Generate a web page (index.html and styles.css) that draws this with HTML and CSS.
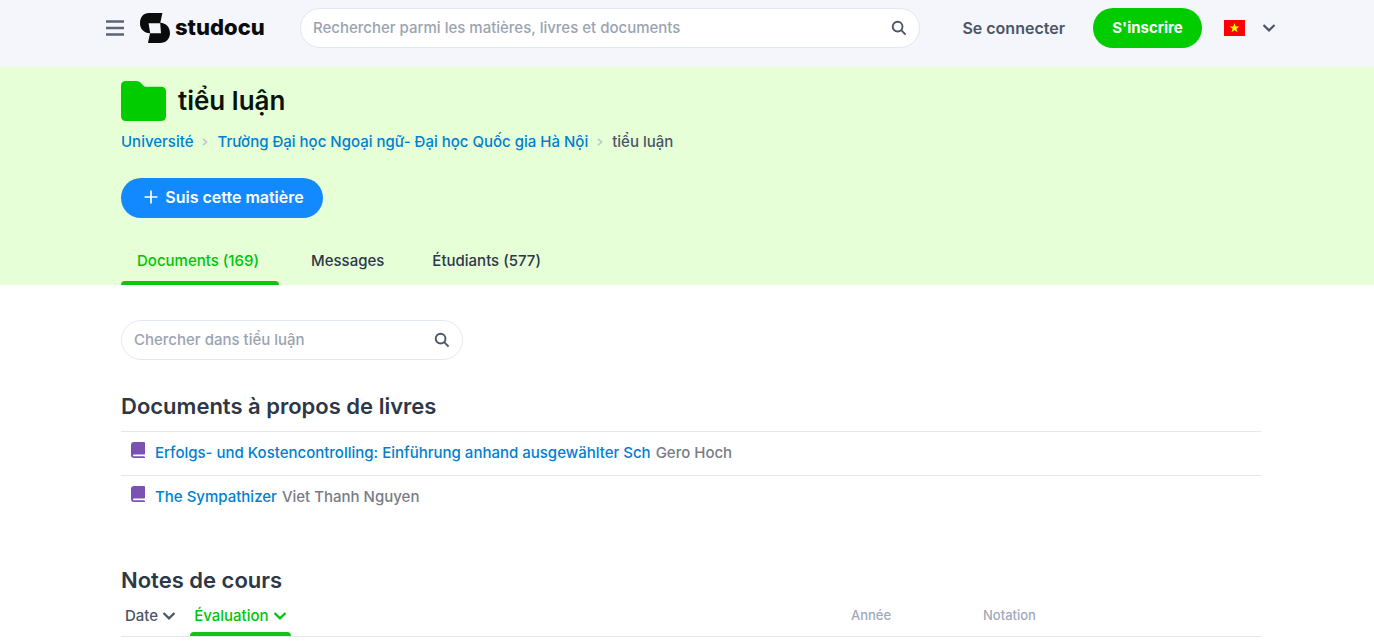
FILE: index.html
```html
<!DOCTYPE html>
<html lang="fr">
<head>
<meta charset="utf-8">
<meta name="viewport" content="width=device-width, initial-scale=1">
<title>tiểu luận - Studocu</title>
<link rel="stylesheet" href="styles.css">
</head>
<body>
<header class="topbar">
  <button class="icon-button menu" type="button" aria-label="Menu">
    <svg width="18" height="16" viewBox="0 0 18 16"><path d="M0 1.5h18M0 8h18M0 14.5h18" stroke="#5b6576" stroke-width="2.4"/></svg>
  </button>
  <a class="logo" href="#">
    <svg width="30" height="30" viewBox="0 0 30 30" aria-hidden="true"><path d="M9 0H22.4L20.3 9.7C26 10 30 14.2 30 20C30 26 26 30 20 30H8L10 20.3C4 19.8 0 16.2 0 10.2C0 4 3.5 0 9 0ZM8.6 10.2L10.2 20.3H21L20.2 10.2Z" fill="#0b0b0c" fill-rule="evenodd"/></svg>
    <span>studocu</span>
  </a>
  <form class="search site-search" role="search">
    <input class="search-input" type="text" aria-label="Rechercher" placeholder="Rechercher parmi les matières, livres et documents">
    <button class="icon-button" type="button" aria-label="Lancer la recherche">
      <svg width="16" height="16" viewBox="0 0 16 16" fill="none" stroke="#4b5566" stroke-width="1.9"><circle cx="6.6" cy="6.6" r="4.9"/><path d="M10.2 10.2L14.6 14.6"/></svg>
    </button>
  </form>
  <a class="login" href="#">Se connecter</a>
  <button class="pill signup" type="button">S'inscrire</button>
  <button class="icon-button country" type="button" aria-label="Choisir un pays">
    <svg width="21" height="16" viewBox="0 0 21 16"><path d="M0 0h21v16H0z" fill="#f00"/><path d="M10.5 3L11.7 6.5H15.3L12.4 8.7L13.5 12.2L10.5 10L7.5 12.2L8.6 8.7L5.7 6.5H9.3Z" fill="#ff0"/></svg>
    <svg class="chevron" width="14" height="8" viewBox="0 0 14 8"><path d="M1.5 1L7 6.4L12.5 1"/></svg>
  </button>
</header>

<section class="hero">
  <div class="hero-title">
    <svg width="45" height="40" viewBox="0 0 45 40" aria-hidden="true"><path d="M5 0H15.5Q18 0 19.7 1.8L22 4.2Q23.3 5.8 25.5 5.8H40Q45 5.8 45 10.8V35Q45 40 40 40H5Q0 40 0 35V5Q0 0 5 0Z" fill="#00cc00"/></svg>
    <h1>tiểu luận</h1>
  </div>
  <nav class="breadcrumbs" aria-label="Fil d'Ariane">
    <a href="#">Université</a>
    <svg class="separator" width="6" height="8" viewBox="0 0 6 8"><path d="M1 .8L4.6 4L1 7.2"/></svg>
    <a href="#">Trường Đại học Ngoại ngữ- Đại học Quốc gia Hà Nội</a>
    <svg class="separator" width="6" height="8" viewBox="0 0 6 8"><path d="M1 .8L4.6 4L1 7.2"/></svg>
    <span>tiểu luận</span>
  </nav>
  <button class="pill follow" type="button">
    <svg width="14" height="14" viewBox="0 0 14 14"><path d="M7 .5V13.5M.5 7H13.5" stroke="#fff" stroke-width="1.7"/></svg>
    Suis cette matière
  </button>
  <nav class="tabs" aria-label="Sections">
    <a class="tab active" href="#">Documents (169)</a>
    <a class="tab" href="#">Messages</a>
    <a class="tab" href="#">Étudiants (577)</a>
  </nav>
</section>

<main>
  <form class="search course-search" role="search">
    <input class="search-input" type="text" aria-label="Chercher dans tiểu luận" placeholder="Chercher dans tiểu luận">
    <button class="icon-button" type="button" aria-label="Chercher">
      <svg width="16" height="16" viewBox="0 0 16 16" fill="none" stroke="#4b5566" stroke-width="1.9"><circle cx="6.6" cy="6.6" r="4.9"/><path d="M10.2 10.2L14.6 14.6"/></svg>
    </button>
  </form>

  <section class="books">
    <h2>Documents à propos de livres</h2>
    <ul class="book-list">
      <li>
        <svg class="book" width="14" height="16" viewBox="0 0 14 16"><path d="M3 0H13Q14 0 14 1V11.8L13.5 12.5V15H14V16H3Q0 16 0 13V3Q0 0 3 0Z" fill="#7952b3"/><path d="M3 12.6H14V14.3H3Q2 14.3 2 13.4Q2 12.6 3 12.6Z" fill="#fff"/></svg>
        <a href="#">Erfolgs- und Kostencontrolling: Einführung anhand ausgewählter Sch</a>
        <span class="author">Gero Hoch</span>
      </li>
      <li>
        <svg class="book" width="14" height="16" viewBox="0 0 14 16"><path d="M3 0H13Q14 0 14 1V11.8L13.5 12.5V15H14V16H3Q0 16 0 13V3Q0 0 3 0Z" fill="#7952b3"/><path d="M3 12.6H14V14.3H3Q2 14.3 2 13.4Q2 12.6 3 12.6Z" fill="#fff"/></svg>
        <a href="#">The Sympathizer</a>
        <span class="author">Viet Thanh Nguyen</span>
      </li>
    </ul>
  </section>

  <section class="notes">
    <h2>Notes de cours</h2>
    <div class="list-head">
      <div class="sorts">
        <button class="sort" type="button"><span class="sort-label">Date <svg class="chevron" width="14" height="8" viewBox="0 0 14 8"><path d="M1.5 1L7 6.4L12.5 1"/></svg></span></button>
        <button class="sort active" type="button"><span class="sort-label">Évaluation <svg class="chevron" width="14" height="8" viewBox="0 0 14 8"><path d="M1.5 1L7 6.4L12.5 1"/></svg></span></button>
      </div>
      <span class="column">Année</span>
      <span class="column">Notation</span>
    </div>
  </section>
</main>
</body>
</html>
```
FILE: styles.css
```css
* {
  box-sizing: border-box;
}

body {
  margin: 0;
  background: #fff;
  color: #2d3748;
  font: 500 15px/24px Inter, "Noto Sans", sans-serif;
}

h1, h2 {
  margin: 0;
}

a {
  color: #0080d0;
  text-decoration: none;
}

button {
  padding: 0;
  border: 0;
  background: none;
  color: inherit;
  font: inherit;
  cursor: pointer;
}

svg {
  display: block;
  flex: none;
}

.icon-button {
  display: flex;
  align-items: center;
}

.chevron {
  fill: none;
  stroke: currentColor;
  stroke-width: 2.2;
}

.topbar {
  display: flex;
  align-items: center;
  padding: 8px 98px 19px 106px;
  background: #f4f6fb;
  color: #4b5566;
}

.logo {
  display: flex;
  align-items: center;
  gap: 5px;
  width: 160px;
  margin-left: 16px;
  color: #0b0b0c;
  font-size: 22px;
  font-weight: 800;
}

.logo span {
  padding-bottom: 2px;
}

.search {
  display: flex;
  align-items: center;
  height: 40px;
  padding: 0 12px;
  border: 1px solid #e2e8f0;
  border-radius: 20px;
  background: #fff;
}

.search-input {
  flex: 1;
  min-width: 0;
  padding: 0;
  border: 0;
  outline: 0;
  background: none;
  color: inherit;
  font: inherit;
}

.search-input::placeholder {
  color: #9aa3b2;
  opacity: 1;
}

.site-search {
  flex: 0 1 620px;
}

.login {
  margin-left: auto;
  color: #4b5566;
  font-size: 16px;
  font-weight: 600;
  white-space: nowrap;
}

.pill {
  height: 40px;
  border-radius: 20px;
  color: #fff;
  font-weight: 700;
  white-space: nowrap;
}

.signup {
  width: 109px;
  margin: 0 22px 0 28px;
  background: #00cc00;
}

.country {
  gap: 17px;
}

.hero {
  padding: 14px 113px 0 121px;
  background: #e6ffd7;
}

.hero-title {
  display: flex;
  align-items: center;
  gap: 12px;
}

h1 {
  color: #07130b;
  font-size: 26px;
  font-weight: 600;
  line-height: 40px;
}

.breadcrumbs {
  display: flex;
  align-items: center;
  gap: 9px;
  margin-top: 9px;
  color: #4b5566;
}

.separator {
  fill: none;
  stroke: #bfc6cc;
  stroke-width: 1.6;
}

.follow {
  display: flex;
  align-items: center;
  justify-content: center;
  gap: 7px;
  width: 202px;
  margin-top: 24px;
  padding: 0 0 2px 4px;
  background: #1389ff;
  font-size: 16px;
  font-weight: 600;
}

.tabs {
  display: flex;
  gap: 16px;
  margin-top: 19px;
}

.tab {
  padding: 12px 16px;
  color: #2d3748;
}

.tab.active {
  min-width: 158px;
  color: #00c40a;
}

.tab::after {
  content: "";
  display: block;
  height: 4px;
  margin: 8px -16px -12px;
  border-radius: 4px 4px 0 0;
}

.tab.active::after {
  background: #10c414;
}

main {
  padding: 35px 113px 0 121px;
}

.course-search {
  width: 342px;
}

h2 {
  font-size: 22px;
  font-weight: 600;
  line-height: 32px;
}

.books {
  margin-top: 30px;
}

.book-list {
  margin: 9px 0 0;
  padding: 0;
  list-style: none;
}

.book-list li {
  display: flex;
  align-items: center;
  height: 44px;
  padding: 0 0 2px 10px;
  border-top: 1px solid #e5e7eb;
}

.book {
  margin: 0 10px 6px 0;
}

.author {
  margin-left: 5px;
  color: #777d85;
}

.notes {
  margin-top: 45px;
}

.list-head {
  display: grid;
  grid-template-columns: 730px 132px 1fr;
  height: 41px;
  border-bottom: 1px solid #e5e7eb;
}

.sorts {
  display: flex;
  gap: 10px;
}

.sort {
  display: flex;
  flex-direction: column;
  padding: 8px 0 0;
  color: #4b5566;
}

.sort-label {
  display: flex;
  align-items: center;
  gap: 4px;
  padding: 0 4px;
}

.sort.active {
  color: #00c40a;
}

.sort.active::after {
  content: "";
  width: 100%;
  height: 4px;
  margin-top: auto;
  border-radius: 4px 4px 0 0;
  background: #10c414;
}

.column {
  padding-top: 7px;
  color: #a0aabb;
  font-size: 13px;
}
```
